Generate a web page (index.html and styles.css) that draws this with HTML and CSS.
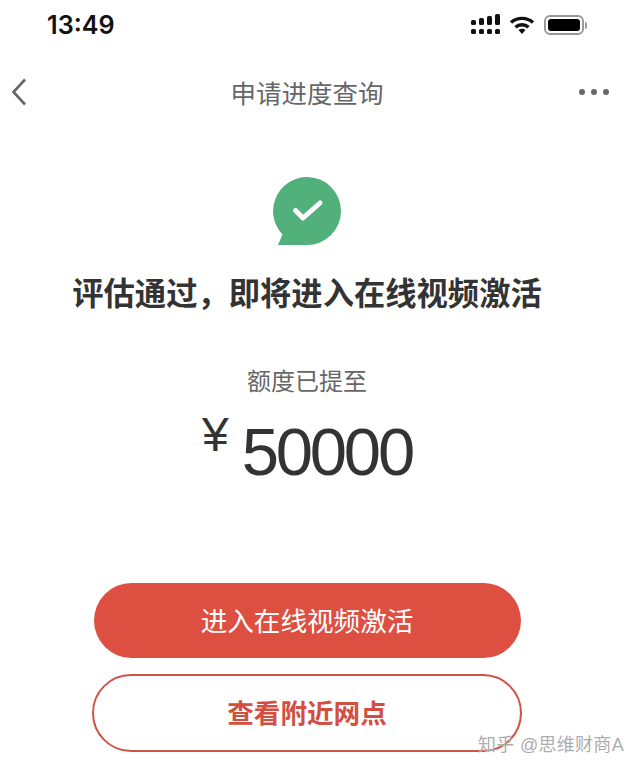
FILE: index.html
```html
<!DOCTYPE html>
<html lang="zh">
<head>
    <meta charset="utf-8">
    <title>申请进度查询</title>
    <link rel="stylesheet" href="styles.css">
</head>
<body>
    <div class="page">
        <!-- status bar -->
        <div class="status">
            <span class="time">13:49</span>
            <div class="status-icons">
                <svg class="signal" width="30" height="22" viewBox="0 0 30 22" fill="#111">
                    <rect x="0" y="6" width="5" height="5" rx="1.5"/>
                    <rect x="8" y="4" width="5" height="7" rx="1.5"/>
                    <rect x="16" y="2" width="5" height="9" rx="1.5"/>
                    <rect x="24" y="0" width="5" height="11" rx="1.5"/>
                    <rect x="0" y="15" width="5" height="5" rx="1.5"/>
                    <rect x="8" y="15" width="5" height="5" rx="1.5"/>
                    <rect x="16" y="15" width="5" height="5" rx="1.5"/>
                    <rect x="24" y="15" width="5" height="5" rx="1.5"/>
                </svg>
                <svg class="wifi" width="26" height="20" viewBox="0 0 26 20" fill="none" stroke="#111" stroke-width="3.4">
                    <path d="M2 7.500C8 2 18 2 24 7.500"/>
                    <path d="M6.500 12.200C10 9 16 9 19.500 12.200"/>
                    <path d="M9.500 15L13 19L16.500 15C14.500 13.400 11.500 13.400 9.500 15Z" fill="#111" stroke="none"/>
                </svg>
                <div class="battery"><div class="battery-fill"></div></div>
                <div class="battery-tip"></div>
            </div>
        </div>

        <!-- nav -->
        <div class="nav">
            <svg class="back" width="16" height="28" viewBox="0 0 16 28" fill="none" stroke="#666" stroke-width="2.6">
                <path d="M14 1.500L2.500 14L14 26.500"/>
            </svg>
            <span class="nav-title">申请进度查询</span>
            <div class="more"><i></i><i></i><i></i></div>
        </div>

        <!-- result -->
        <div class="result">
            <svg class="bubble" width="68" height="68" viewBox="0 0 68 68">
                <path d="M34 0A34 34 0 1 1 34 68H5L9.500 57.500A34 34 0 0 1 34 0Z" fill="#52b07a"/>
                <path d="M22.500 33.500L30 41L47 26" fill="none" stroke="#fff" stroke-width="5" stroke-linecap="round" stroke-linejoin="round"/>
            </svg>
            <h1 class="headline">评估通过&#65292;即将进入在线视频激活</h1>
            <p class="limit-label">额度已提至</p>
            <div class="amount">
                <span class="currency">¥</span>
                <span class="number">50000</span>
            </div>
        </div>

        <!-- buttons -->
        <div class="actions">
            <button class="btn btn-main">进入在线视频激活</button>
            <button class="btn btn-outline">查看附近网点</button>
        </div>

        <div class="watermark">知乎 @思维财商A</div>
    </div>
</body>
</html>
```

FILE: styles.css
```css
* {
    box-sizing: border-box;
}

html, body {
    margin: 0;
    height: 100%;
    background-color: #fff;
}

body {
    font-family: "Liberation Sans", "Noto Sans CJK SC", sans-serif;
    color: #333;
    overflow: hidden;
}

.page {
    position: relative;
    width: 640px;
    height: 771px;
    overflow: hidden;
}

/* Status bar */
.status {
    display: flex;
    justify-content: space-between;
    align-items: center;
    height: 50px;
    padding: 0 53px 0 47px;
}

.time {
    font-family: Inter, "Liberation Sans", sans-serif;
    font-size: 25.200px;
    font-weight: 600;
    color: #111;
}

.status-icons {
    display: flex;
    align-items: center;
}

.signal {
    margin-right: 8px;
}

.wifi {
    margin-right: 9px;
}

.battery {
    width: 40px;
    height: 20px;
    padding: 2px;
    border: 2px solid #999;
    border-radius: 6px;
}

.battery-fill {
    height: 100%;
    background-color: #000;
    border-radius: 3px;
}

.battery-tip {
    width: 2px;
    height: 7px;
    margin-left: 1px;
    background-color: #999;
    border-radius: 0 2px 2px 0;
}

/* Nav: the screenshot is cropped, content centres on 307 */
.nav {
    display: flex;
    justify-content: space-between;
    align-items: center;
    width: 640px;
    height: 52px;
    margin-top: 16px;
    padding: 0 31px 0 11px;
}

.nav-title {
    margin-left: 8px;
    padding-bottom: 2px;
    font-size: 25.500px;
    color: #666;
}

.more {
    display: flex;
    gap: 6px;
}

.more i {
    width: 6px;
    height: 6px;
    border-radius: 50%;
    background-color: #666;
}

/* Result block */
.result {
    display: flex;
    flex-direction: column;
    align-items: center;
    width: 614px;
    padding-top: 59px;
}

.headline {
    margin: 28px 0 0;
    font-size: 31.300px;
    line-height: 44px;
    font-weight: 700;
    color: #333;
}

.limit-label {
    margin: 49px 0 0;
    font-size: 24px;
    line-height: 32px;
    color: #666;
}

.amount {
    display: flex;
    align-items: flex-start;
    height: 75px;
    margin-top: 16px;
}

.currency {
    margin-top: -4px;
    margin-right: 13px;
    font-size: 48px;
    line-height: 50px;
    color: #333;
}

.number {
    font-size: 67px;
    line-height: 75px;
    letter-spacing: -3.200px;
    color: #333;
}

/* Buttons */
.actions {
    display: flex;
    flex-direction: column;
    align-items: center;
    gap: 17px;
    width: 614px;
    margin-top: 94px;
}

.btn {
    display: block;
    font-family: inherit;
    border-radius: 40px;
    cursor: pointer;
}

.btn-main {
    width: 427px;
    height: 75px;
    padding-bottom: 4px;
    border: none;
    background-color: #dd4f41;
    color: #fff;
    font-size: 26.600px;
}

.btn-outline {
    width: 430px;
    height: 78px;
    margin-top: -1px;
    padding-bottom: 5px;
    border: 2px solid #cf5347;
    background-color: #fff;
    color: #d24f42;
    font-size: 26.600px;
    font-weight: 700;
}

/* Watermark on top of the corner */
.watermark {
    position: absolute;
    left: 478px;
    top: 733px;
    font-size: 18px;
    line-height: 24px;
    letter-spacing: 0.300px;
    color: rgba(150, 150, 150, 0.8);
    text-shadow: 0 0 1px #fff;
}
```
